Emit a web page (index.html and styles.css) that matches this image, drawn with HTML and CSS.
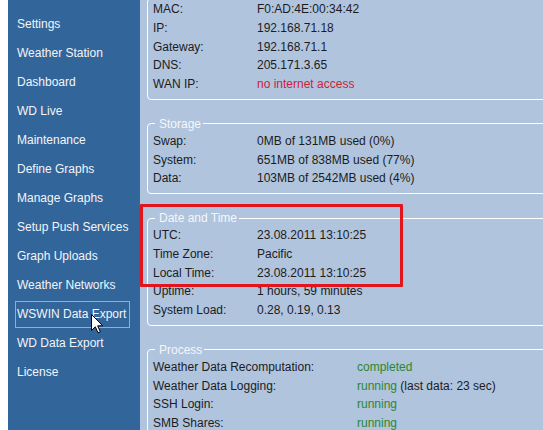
FILE: index.html
```html
<!DOCTYPE html>
<html lang="en">
<head>
    <meta charset="UTF-8">
    <title>System Status</title>
    <link rel="stylesheet" href="styles.css">
</head>
<body>
    <div class="page">
        <!-- Menu -->
        <nav class="sidebar">
            <a class="nav-item" href="#">Settings</a>
            <a class="nav-item" href="#">Weather Station</a>
            <a class="nav-item" href="#">Dashboard</a>
            <a class="nav-item" href="#">WD Live</a>
            <a class="nav-item" href="#">Maintenance</a>
            <a class="nav-item" href="#">Define Graphs</a>
            <a class="nav-item" href="#">Manage Graphs</a>
            <a class="nav-item" href="#">Setup Push Services</a>
            <a class="nav-item" href="#">Graph Uploads</a>
            <a class="nav-item" href="#">Weather Networks</a>
            <a class="nav-item nav-hover" href="#">WSWIN Data Export</a>
            <a class="nav-item" href="#">WD Data Export</a>
            <a class="nav-item" href="#">License</a>
        </nav>

        <!-- Status -->
        <main class="content">
            <fieldset class="panel panel-first">
                <table>
                    <tr><td class="label">MAC:</td><td>F0:AD:4E:00:34:42</td></tr>
                    <tr><td class="label">IP:</td><td>192.168.71.18</td></tr>
                    <tr><td class="label">Gateway:</td><td>192.168.71.1</td></tr>
                    <tr><td class="label">DNS:</td><td>205.171.3.65</td></tr>
                    <tr><td class="label">WAN IP:</td><td class="bad">no internet access</td></tr>
                </table>
            </fieldset>

            <fieldset class="panel">
                <legend>Storage</legend>
                <table>
                    <tr><td class="label">Swap:</td><td>0MB of 131MB used (0%)</td></tr>
                    <tr><td class="label">System:</td><td>651MB of 838MB used (77%)</td></tr>
                    <tr><td class="label">Data:</td><td>103MB of 2542MB used (4%)</td></tr>
                </table>
            </fieldset>

            <fieldset class="panel">
                <legend>Date and Time</legend>
                <table>
                    <tr><td class="label">UTC:</td><td>23.08.2011 13:10:25</td></tr>
                    <tr><td class="label">Time Zone:</td><td>Pacific</td></tr>
                    <tr><td class="label">Local Time:</td><td>23.08.2011 13:10:25</td></tr>
                    <tr><td class="label">Uptime:</td><td>1 hours, 59 minutes</td></tr>
                    <tr><td class="label">System Load:</td><td>0.28, 0.19, 0.13</td></tr>
                </table>
            </fieldset>

            <fieldset class="panel">
                <legend>Process</legend>
                <table>
                    <tr><td class="label label-wide">Weather Data Recomputation:</td><td class="ok">completed</td></tr>
                    <tr><td class="label label-wide">Weather Data Logging:</td><td><span class="ok">running</span> (last data: 23 sec)</td></tr>
                    <tr><td class="label label-wide">SSH Login:</td><td class="ok">running</td></tr>
                    <tr><td class="label label-wide">SMB Shares:</td><td class="ok">running</td></tr>
                </table>
            </fieldset>
        </main>
    </div>

    <!-- Annotation -->
    <div class="highlight"></div>

    <svg class="cursor" width="13" height="20" viewBox="0 0 13 20">
        <path d="M0.5 0.5 L0.5 16.5 L4.3 12.8 L7 18.8 L9.3 17.8 L6.7 11.8 L11.8 11.8 Z" fill="#fff" stroke="#000" stroke-width="1" stroke-linejoin="miter"/>
    </svg>
</body>
</html>
```

FILE: styles.css
```css
html, body {
    margin: 0;
    padding: 0;
    height: 100%;
}

body {
    background-color: #fff;
    font-family: "Liberation Sans", Arial, sans-serif;
    font-size: 12px;
    color: #1c1c1c;
    overflow: hidden;
    position: relative;
}

.page {
    display: flex;
    height: 430px;
    padding-left: 8px;
}

/* Menu */
.sidebar {
    width: 132px;
    flex-shrink: 0;
    background-color: #32659a;
    padding-top: 11px;
    box-sizing: border-box;
}

.nav-item {
    display: block;
    width: 112px;
    height: 25px;
    line-height: 25px;
    margin: 0 0 2px 7px;
    padding-left: 1px;
    border: 1px solid transparent;
    color: #f2f5f9;
    text-decoration: none;
    white-space: nowrap;
    overflow: hidden;
}

.nav-hover {
    border-color: #8eaed4;
}

/* Status */
.content {
    flex: 1;
    background-color: #b0c4de;
    padding-left: 7px;
    overflow: hidden;
}

.panel {
    width: 600px;
    margin: 0 0 17px 0;
    padding: 1px 5px 5px;
    border: 1px solid #fff;
    border-radius: 4px;
}

.panel-first {
    margin-top: -2px;
}

.panel legend {
    margin-left: 2px;
    padding: 0 2px 0 4px;
    line-height: 14px;
    color: #f4f7fb;
}

.panel table {
    border-collapse: collapse;
    border-spacing: 0;
}

.panel td {
    padding: 0;
    height: 18.75px;
    line-height: 18.75px;
    white-space: nowrap;
}

.label {
    width: 104px;
}

.label-wide {
    width: 204px;
}

.bad {
    color: #d1203c;
}

.ok {
    color: #2b872f;
}

/* Annotation overlay */
.highlight {
    position: absolute;
    left: 140px;
    top: 204px;
    width: 257px;
    height: 77px;
    border: 3px solid #e2141e;
    border-radius: 1px;
}

.cursor {
    position: absolute;
    left: 91px;
    top: 314px;
}
```
